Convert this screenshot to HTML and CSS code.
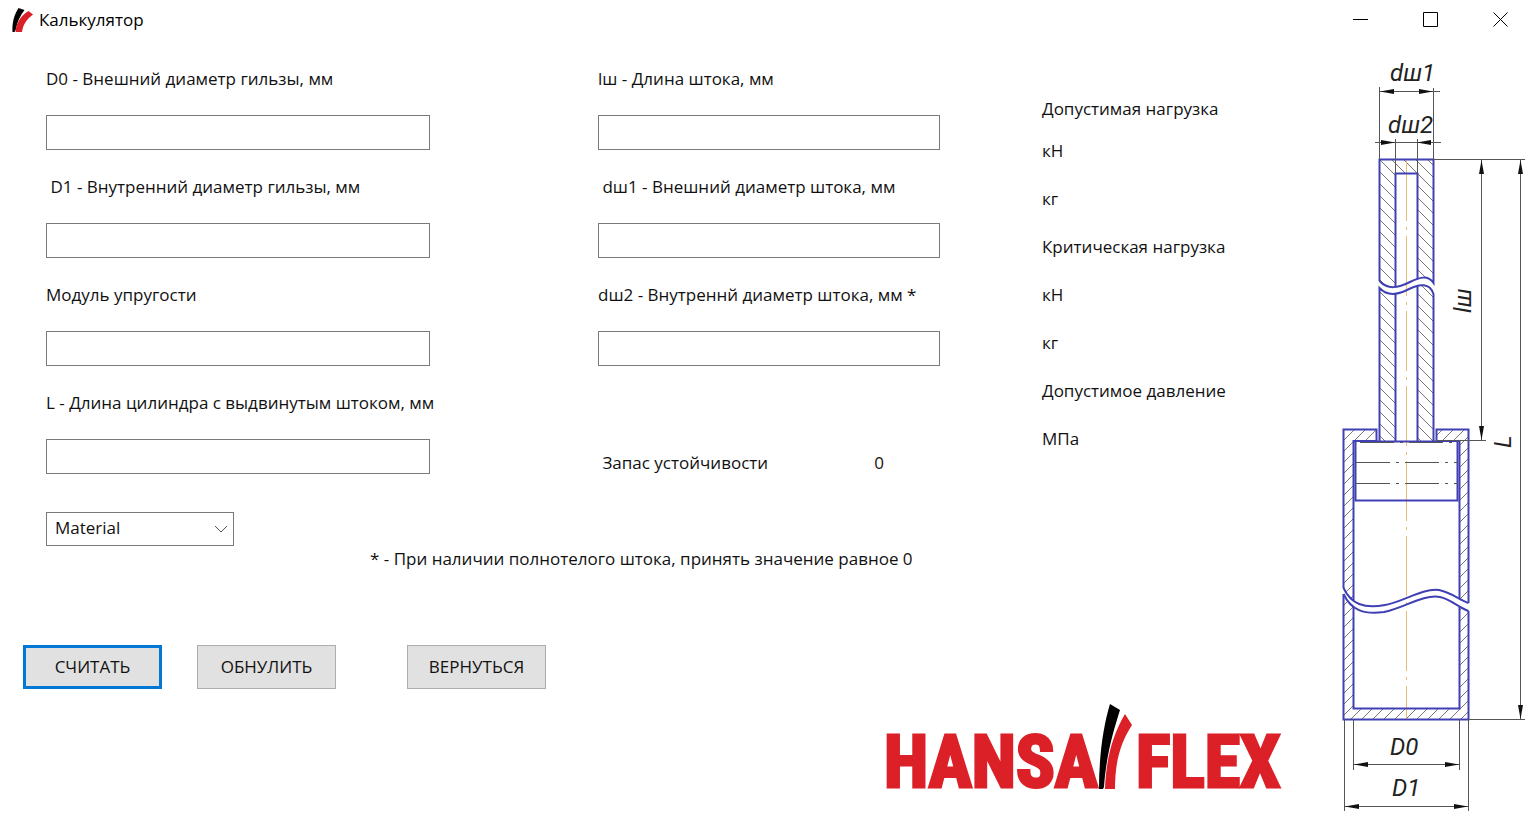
FILE: index.html
```html
<!DOCTYPE html>
<html lang="ru">
<head>
<meta charset="utf-8">
<title>Калькулятор</title>
<link rel="stylesheet" href="styles.css">
</head>
<body>
<header class="titlebar">
  <svg class="app-icon" viewBox="0 0 22 26" aria-hidden="true">
    <path d="M6.500 1L12.500 3C8 9 5 15 4 22L2.500 25H0.500C0 16 2 8 6.500 1Z" fill="#000"/>
    <path d="M16.500 4L21 7.500C14 13 11 18 10 25H3.500C4 17 8 9 16.500 4Z" fill="#dc2027"/>
  </svg>
  <h1 class="title">Калькулятор</h1>
  <div class="window-buttons">
    <button type="button" class="window-button" aria-label="Свернуть"><svg viewBox="0 0 16 16"><path d="M0 7.500H15"/></svg></button>
    <button type="button" class="window-button" aria-label="Развернуть"><svg viewBox="0 0 16 16"><path d="M.5 .5H14.500V14.500H.5Z"/></svg></button>
    <button type="button" class="window-button" aria-label="Закрыть"><svg viewBox="0 0 16 16"><path d="M.5 .5L14.500 14.500M14.500 .5L.5 14.500"/></svg></button>
  </div>
</header>
<main class="main">
  <form class="workspace">
    <div class="columns">
      <div class="column column-cylinder">
        <div class="field"><label for="d0">D0 - Внешний диаметр гильзы, мм</label><input id="d0" type="text"></div>
        <div class="field"><label for="d1">&nbsp;D1 - Внутренний диаметр гильзы, мм</label><input id="d1" type="text"></div>
        <div class="field"><label for="modulus">Модуль упругости</label><input id="modulus" type="text"></div>
        <div class="field"><label for="length">L - Длина цилиндра с выдвинутым штоком, мм</label><input id="length" type="text"></div>
        <div class="picker">
          <select aria-label="Material"><option>Material</option></select>
          <svg class="chevron" viewBox="0 0 14 8" aria-hidden="true"><path d="M1 1L7 7L13 1"/></svg>
        </div>
      </div>
      <div class="column column-rod">
        <div class="field"><label for="rod">lш - Длина штока, мм</label><input id="rod" type="text"></div>
        <div class="field"><label for="rod1">&nbsp;dш1 - Внешний диаметр штока, мм</label><input id="rod1" type="text"></div>
        <div class="field"><label for="rod2">dш2 - Внутреннй диаметр штока, мм *</label><input id="rod2" type="text"></div>
        <div class="stability"><span>&nbsp;Запас устойчивости</span><output>0</output></div>
      </div>
      <div class="results">
        <p class="first">Допустимая нагрузка</p>
        <p>кН</p>
        <p>кг</p>
        <p>Критическая нагрузка</p>
        <p>кН</p>
        <p>кг</p>
        <p>Допустимое давление</p>
        <p>МПа</p>
      </div>
    </div>
    <p class="note">* - При наличии полнотелого штока, принять значение равное 0</p>
    <div class="actions">
      <button type="button" class="action primary">СЧИТАТЬ</button>
      <button type="button" class="action">ОБНУЛИТЬ</button>
      <button type="button" class="action back">ВЕРНУТЬСЯ</button>
    </div>
    <svg class="logo" viewBox="-6 0 418 110" role="img" aria-label="HANSA FLEX">
      <text x="-1" y="84">HANSA</text>
      <text x="251" y="84">FLEX</text>
      <path d="M225 1L235 7C228 29 221 54 219 84L218 86H214C214 54 218 24 225 1Z" fill="#000"/>
      <path d="M240 11L247 22C234 42 230 62 230 86H220C221 57 227 33 240 11Z" fill="#dc2027"/>
    </svg>
  </form>
  <svg class="drawing" viewBox="1320 40 212 784" role="img" aria-label="Чертёж цилиндра">
    <defs>
      <pattern id="hatch-rod" width="12" height="12" patternUnits="userSpaceOnUse" x="1379" y="159"><path d="M-1 -1L13 13M-1 11L1 13M11 -1L13 1"/></pattern>
      <pattern id="hatch-tube" width="11" height="11" patternUnits="userSpaceOnUse" x="1343" y="430"><path d="M-1 12L12 -1M-1 1L1 -1M10 12L12 10"/></pattern>
      <marker id="arrow" viewBox="0 0 14 6" markerWidth="14" markerHeight="6" refX="14" refY="3" orient="auto-start-reverse" markerUnits="userSpaceOnUse"><path d="M0 .5L14 3L0 5.500Z" fill="#111"/></marker>
    </defs>
    <g>
      <path fill="url(#hatch-rod)" d="M1379 159H1433V283Q1424 274 1417 279V174H1395V287Q1386 288 1379 281Z"/>
      <path fill="url(#hatch-rod)" d="M1379 289Q1386 295 1395 294V441H1379ZM1417 286Q1429 282 1433 294V441H1417Z"/>
      <path fill="url(#hatch-tube)" d="M1344 430H1376V441H1353V600Q1348 596 1344 588ZM1436 430H1468V603L1459 598V441H1436Z"/>
      <path fill="url(#hatch-tube)" d="M1344 594Q1348 605 1353 607V709H1459V606L1468 611V719H1344Z"/>
    </g>
    <path class="axis" d="M1406.500 161V719"/>
    <g class="outline">
      <path d="M1379.500 281V159.500H1433.500V283C1428 275 1420 277 1410 282C1398 288 1388 290 1379.500 281"/>
      <path d="M1395.500 287V173.500H1417.500V279"/>
      <path d="M1379.500 441V288C1386 295 1395 296 1407 290C1420 283 1430 283 1433.500 294V441M1395.500 294V441M1417.500 286V441"/>
      <path d="M1343.500 588V429.500H1376.500V441H1353.500V600M1459.500 598V441H1436.500V429.500H1468.500V603"/>
      <path d="M1376 441.500H1436"/>
      <path d="M1355.500 441V500.500H1457.500V441"/>
      <path d="M1343.500 588C1351 604 1364 609 1385 605C1403 602 1422 588 1439 590C1450 592 1458 599 1468.500 603"/>
      <path d="M1343.500 594C1351 610 1364 615 1384 612C1404 608 1423 594 1440 597C1450 599 1458 607 1468.500 611"/>
      <path d="M1343.500 594V719.500H1468.500V611M1353.500 607V708.500H1459.500V606"/>
    </g>
    <path class="dashes" d="M1356 462.500H1458M1356 483.500H1458M1360 442.500H1453"/>
    <g class="dimension">
      <path d="M1379.500 87V159M1433.500 88V159M1395.500 139V174M1417.500 139V174M1433 91.500H1440M1395 142.500H1417"/>
      <path marker-start="url(#arrow)" marker-end="url(#arrow)" d="M1380 91.500H1433"/>
      <path marker-end="url(#arrow)" d="M1375 142.500H1395"/>
      <path marker-end="url(#arrow)" d="M1441 142.500H1417"/>
      <path d="M1433 159.500H1525M1436 440.500H1486M1468 719.500H1525"/>
      <path marker-start="url(#arrow)" marker-end="url(#arrow)" d="M1481.500 160V440"/>
      <path marker-start="url(#arrow)" marker-end="url(#arrow)" d="M1520.500 160V719"/>
      <path d="M1353.500 719V770M1459.500 719V770M1344.500 719V811M1468.500 719V811"/>
      <path marker-start="url(#arrow)" marker-end="url(#arrow)" d="M1354 764.500H1459"/>
      <path marker-start="url(#arrow)" marker-end="url(#arrow)" d="M1345 806.500H1468"/>
    </g>
    <g class="caption">
      <text x="1390" y="81">dш1</text>
      <text x="1388" y="133">dш2</text>
      <text x="1390" y="755">D0</text>
      <text x="1392" y="796">D1</text>
      <text transform="translate(1471 313) rotate(-90)">lш</text>
      <text transform="translate(1511 448) rotate(-90)">L</text>
    </g>
  </svg>
</main>
</body>
</html>
```
FILE: styles.css
```css
* { box-sizing: border-box; }
body {
  margin: 0;
  background: #fff;
  color: #111;
  font: 17px/24px "Open Sans", "Noto Sans", sans-serif;
}
p, h1 { margin: 0; }
button, input, select { font: inherit; color: inherit; border-radius: 0; }
.titlebar { display: flex; align-items: center; height: 40px; padding-left: 12px; }
.app-icon { width: 22px; height: 26px; }
.title { margin-left: 5px; font-size: 17px; font-weight: 400; color: #000; }
.window-buttons { display: flex; gap: 8px; height: 40px; margin-left: auto; }
.window-button {
  display: flex; align-items: center; justify-content: center;
  width: 62px; padding: 0; border: 0; background: none;
}
.window-button svg { width: 16px; height: 16px; fill: none; stroke: #000; }
.main { display: flex; align-items: flex-start; }
.workspace { flex: 1; min-width: 0; padding-top: 27px; }
.columns {
  display: grid; padding-left: 46px;
  grid-template-columns: minmax(0, 552fr) minmax(0, 444fr) minmax(0, 278fr);
}
.column { display: flex; flex-direction: column; gap: 25px; white-space: nowrap; }
.column-cylinder { padding-right: 168px; }
.column-rod { padding-right: 102px; }
.field { display: flex; flex-direction: column; gap: 24px; }
.field input { width: 100%; height: 35px; padding: 0 8px; border: 1px solid #7a7a7a; background: #fff; }
.picker { display: grid; align-items: center; width: 188px; margin-top: 13px; }
.picker select {
  grid-area: 1 / 1; height: 34px; padding: 0 30px 2px 8px;
  border: 1px solid #7a7a7a; background: #fff; appearance: none;
}
.chevron {
  grid-area: 1 / 1; justify-self: end; width: 14px; height: 8px; margin-right: 6px;
  fill: none; stroke: #555; pointer-events: none;
}
.stability { display: flex; justify-content: space-between; padding-right: 56px; margin-top: 60px; }
.results { display: flex; flex-direction: column; gap: 24px; padding-top: 30px; white-space: nowrap; }
.results .first { margin-bottom: -6px; }
.note { padding-left: 370px; margin-top: 1px; }
.actions { display: flex; gap: 35px; padding-left: 23px; margin-top: 74px; }
.action { width: 139px; height: 44px; padding: 0; border: 1px solid #adadad; background: #e1e1e1; }
.action.primary { border: 3px solid #0078d7; }
.action.back { margin-left: 36px; }
.logo { display: block; width: 418px; height: 110px; margin: 14px 23px 0 auto; }
.logo text {
  font: 700 72px "Roboto Condensed", Roboto, sans-serif;
  fill: #dc2027; stroke: #dc2027; stroke-width: 3px;
}
.drawing { flex: none; width: 212px; height: 784px; }
pattern path { fill: none; stroke: #777; }
.axis { stroke: #e6bd78; stroke-dasharray: 60 6 3 6; }
.outline { fill: none; stroke: #4040b4; stroke-width: 2px; }
.dashes { fill: none; stroke: #555; stroke-dasharray: 34 6 3 6; }
.dimension { fill: none; stroke: #555; }
.caption { font: italic 24px Roboto, sans-serif; fill: #222; }
```
